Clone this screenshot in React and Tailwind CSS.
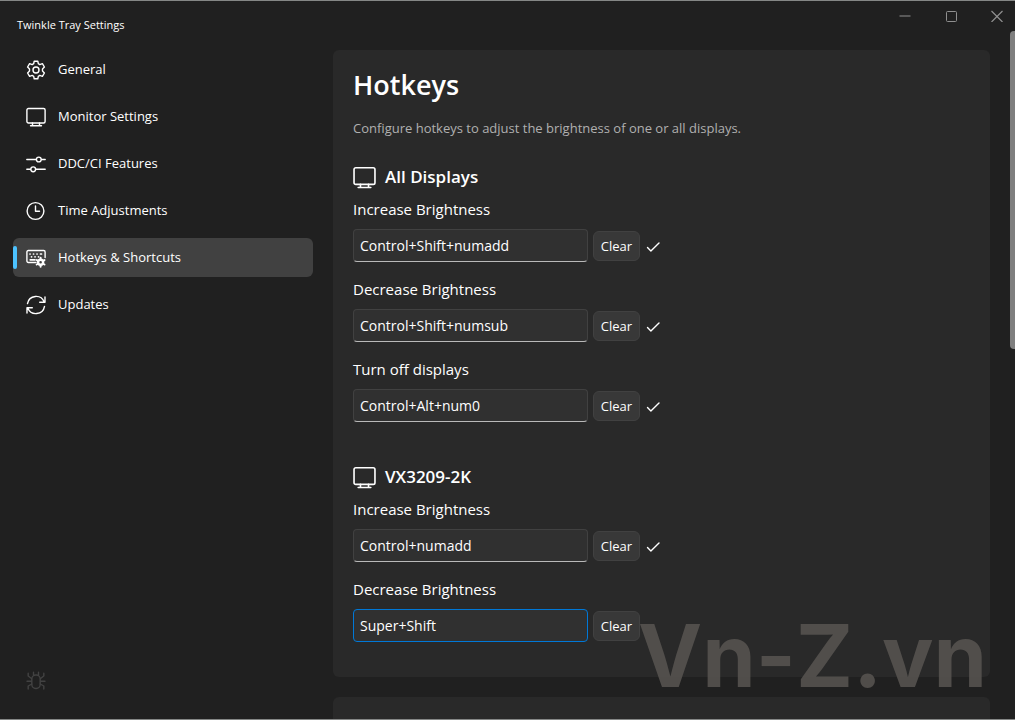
import React from "react";

const stroke = {
  fill: "none",
  stroke: "currentColor",
  strokeWidth: 1.4,
  strokeLinecap: "round",
  strokeLinejoin: "round",
};

function Icon({ children, className = "h-5 w-5" }) {
  return (
    <svg viewBox="0 0 20 20" className={`shrink-0 ${className}`} aria-hidden="true" {...stroke}>
      {children}
    </svg>
  );
}

function GearIcon() {
  return (
    <Icon>
      <path d="M8.2 1.2h3.6l.5 2.5 1.5.9 2.6-.9 2 3.3-1.9 1.9v2.2l1.9 1.9-2 3.3-2.6-.9-1.5.9-.5 2.5H8.2l-.5-2.5-1.5-.9-2.6.9-2-3.3 1.9-1.9V8.9L1.600 7l2-3.300 2.600.900 1.500-.900z" />
      <circle cx="10" cy="10" r="3" />
    </Icon>
  );
}

function MonitorIcon({ className }) {
  return (
    <Icon className={className}>
      <rect x="0.900" y="1.500" width="18.200" height="14.500" rx="1.500" />
      <path d="M6.500 16v2.500M13.500 16v2.500M4.500 18.700h11" />
    </Icon>
  );
}

function SlidersIcon() {
  return (
    <Icon>
      <path d="M.800 5.500h9.200M15.600 5.500h3.600M.800 15.300h3.600M10 15.300h9.200" />
      <circle cx="12.800" cy="5.500" r="2.400" />
      <circle cx="7.200" cy="15.300" r="2.400" />
    </Icon>
  );
}

function ClockIcon() {
  return (
    <Icon>
      <circle cx="9.500" cy="10" r="8.400" />
      <path d="M9.500 5v5.200h4" />
    </Icon>
  );
}

function KeyboardIcon() {
  return (
    <Icon>
      <path d="M10 14.500H2.300a1.400 1.400 0 0 1-1.400-1.400V3.900a1.400 1.400 0 0 1 1.400-1.400h15.400a1.400 1.400 0 0 1 1.400 1.400v5.600" />
      <path
        d="M4 6h.1M7.500 6h.1M11 6h.1M14.500 6h1M5.500 8.800h.1M9 8.800h.1M12.500 8.800h.1M4.200 11.800h4.800"
        strokeWidth="1.700"
      />
      <circle cx="14.600" cy="14.300" r="2.500" strokeWidth="2.400" />
      <path
        d="M14.600 9.800v1M14.600 17.800v1M10.700 12.100l.900.500M17.600 16l.900.500M10.700 16.500l.900-.500M17.600 12.600l.900-.500"
        strokeWidth="2"
      />
    </Icon>
  );
}

function RefreshIcon() {
  return (
    <Icon>
      <path d="M1.500 8.600A8.700 8.700 0 0 1 18.200 7M19 1.900v5.300h-5.300" />
      <path d="M18.500 11.400A8.700 8.700 0 0 1 1.800 13M1 18.100v-5.300h5.300" />
    </Icon>
  );
}

function BugIcon() {
  return (
    <Icon>
      <rect x="5.800" y="4" width="8.400" height="13.500" rx="4" />
      <path d="M7.500 3.800V1.300M12.500 3.800V1.300M5.500 7.500L2.200 5V2.300M14.500 7.500L17.800 5V2.300M5.500 10.200H1M14.500 10.200H19M5.800 13l-3.600 2v3M14.200 13l3.600 2v3" />
    </Icon>
  );
}

function CheckIcon() {
  return (
    <svg viewBox="0 0 14 12" className="h-3 w-[14px] shrink-0" role="img" aria-label="Saved" {...stroke}>
      <path d="M1.500 7.500l3.400 3.400L13 3" />
    </svg>
  );
}

const navItems = [
  { label: "General", icon: <GearIcon /> },
  { label: "Monitor Settings", icon: <MonitorIcon /> },
  { label: "DDC/CI Features", icon: <SlidersIcon /> },
  { label: "Time Adjustments", icon: <ClockIcon /> },
  { label: "Hotkeys & Shortcuts", icon: <KeyboardIcon />, active: true },
  { label: "Updates", icon: <RefreshIcon /> },
];

const groups = [
  {
    name: "All Displays",
    hotkeys: [
      { label: "Increase Brightness", keys: "Control+Shift+numadd", saved: true },
      { label: "Decrease Brightness", keys: "Control+Shift+numsub", saved: true },
      { label: "Turn off displays", keys: "Control+Alt+num0", saved: true },
    ],
  },
  {
    name: "VX3209-2K",
    hotkeys: [
      { label: "Increase Brightness", keys: "Control+numadd", saved: true },
      { label: "Decrease Brightness", keys: "Super+Shift", editing: true },
    ],
  },
];

function TitleBar() {
  return (
    <header className="flex h-[49px] shrink-0 items-start justify-between">
      <span className="pl-[17px] pt-[14px] text-[11px] leading-5">Twinkle Tray Settings</span>
      <div className="flex text-[#8f8f8f]">
        <button aria-label="Minimize" className="flex h-[30px] w-[46px] items-center justify-center">
          <svg viewBox="0 0 12 12" className="h-3 w-3" fill="none" stroke="currentColor">
            <path d="M0.500 6h11" strokeWidth="2" opacity=".5" />
          </svg>
        </button>
        <button aria-label="Maximize" className="flex h-[30px] w-[46px] items-center justify-center">
          <svg viewBox="0 0 12 12" className="h-3 w-3" fill="none" stroke="currentColor">
            <rect x="1.500" y="1.500" width="10" height="10" rx="1" />
          </svg>
        </button>
        <button aria-label="Close" className="flex h-[30px] w-[41px] items-center justify-center pl-1">
          <svg viewBox="0 0 12 12" className="h-3 w-3" fill="none" stroke="currentColor" strokeWidth="1.200">
            <path d="M.500 1l11 11M11.500 1L.500 12" />
          </svg>
        </button>
      </div>
    </header>
  );
}

function Sidebar() {
  return (
    <nav className="flex w-[333px] shrink-0 flex-col justify-between pb-[28px] pl-[13px] pr-5">
      <ul className="flex flex-col gap-2">
        {navItems.map((item) => (
          <li key={item.label}>
            <button
              aria-current={item.active ? "page" : undefined}
              className={`relative flex h-[39px] w-full items-center gap-3 rounded-md pl-[13px] text-left text-[13px] leading-5 ${
                item.active ? "bg-[#414141]" : ""
              }`}
            >
              {item.active && (
                <span className="absolute left-0 top-2 h-[23px] w-1 rounded-sm bg-[#4cc2ff]" />
              )}
              {item.icon}
              <span className="pb-[2px]">{item.label}</span>
            </button>
          </li>
        ))}
      </ul>
      <button aria-label="Report a bug" className="ml-[13px] self-start text-[#424242]">
        <BugIcon />
      </button>
    </nav>
  );
}

function HotkeyRow({ id, hotkey }) {
  return (
    <div className="flex flex-col gap-[10px]">
      <label htmlFor={id} className="text-[15px] leading-5">
        {hotkey.label}
      </label>
      <div className="flex items-center">
        <input
          id={id}
          type="text"
          defaultValue={hotkey.keys}
          className={`h-[33px] w-[235px] rounded border bg-[#303030] px-[6px] text-[14px] outline-none ${
            hotkey.editing ? "border-[#0078d7]" : "border-[#414141] border-b-[#b9b9b9]"
          }`}
        />
        <button className="ml-[5px] mr-[6px] h-[30px] w-[47px] rounded-md border border-[#414141] bg-[#383838] text-[13px] leading-5">
          Clear
        </button>
        {hotkey.saved && <CheckIcon />}
      </div>
    </div>
  );
}

export default function App() {
  return (
    <div className="relative flex h-screen flex-col overflow-hidden border-y border-[#858786] bg-[#202020] font-['Open_Sans','Noto_Sans',sans-serif] text-white">
      <TitleBar />
      <div className="flex min-h-0 flex-1">
        <Sidebar />
        <main className="flex min-w-0 flex-1 flex-col gap-5 overflow-hidden pr-[25px]">
          <section className="shrink-0 rounded-md bg-[#292929] px-5 pb-[35px] pt-[17px]">
            <h1 className="text-[27px] font-semibold leading-9">Hotkeys</h1>
            <p className="mt-[15px] text-[13px] leading-5 text-[#b0b0b0]">
              Configure hotkeys to adjust the brightness of one or all displays.
            </p>
            <div className="mt-[27px] flex flex-col gap-[43px]">
              {groups.map((group, g) => (
                <div key={group.name}>
                  <h2 className="flex items-center gap-[9px] text-[17px] font-semibold leading-6">
                    <MonitorIcon className="h-[23px] w-[23px]" />
                    {group.name}
                  </h2>
                  <div className="mt-[10px] flex flex-col gap-[17px]">
                    {group.hotkeys.map((hotkey, i) => (
                      <HotkeyRow key={hotkey.label} id={`hotkey-${g}-${i}`} hotkey={hotkey} />
                    ))}
                  </div>
                </div>
              ))}
            </div>
          </section>
          <section className="h-40 shrink-0 rounded-md bg-[#292929]" />
        </main>
      </div>
      <div className="absolute right-0 top-[30px] h-[318px] w-[5px] rounded-l bg-[#7f7f7f]" />
      <div className="pointer-events-none absolute bottom-5 right-7 font-['Inter',sans-serif] text-[86px] font-bold leading-none text-[#55524f]/90">
        Vn-Z.vn
      </div>
    </div>
  );
}
